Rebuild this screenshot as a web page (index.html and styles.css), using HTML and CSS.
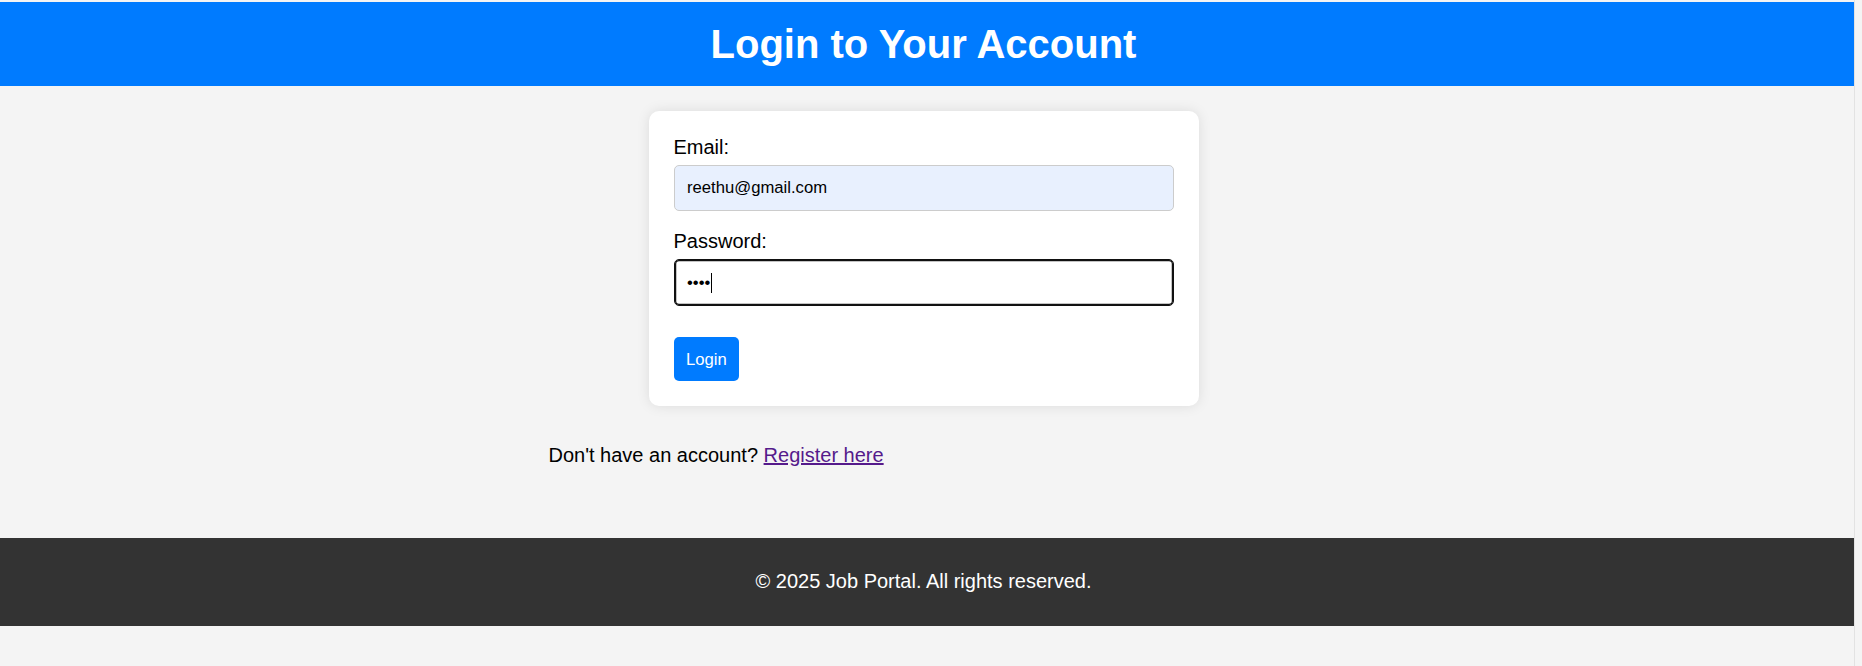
FILE: index.html
```html
<!DOCTYPE html>
<html lang="en">
<head>
<meta charset="utf-8">
<title>Login - Job Portal</title>
<link rel="stylesheet" href="styles.css">
</head>
<body>
  <header class="site-header">
    <h1 class="site-title">Login to Your Account</h1>
  </header>
  <main class="container">
    <form class="login-card" action="#" onsubmit="return false;">
      <label class="field-label" for="email">Email:</label>
      <input class="field-input field-autofill" type="email" id="email" name="email" value="reethu@gmail.com">
      <label class="field-label" for="password">Password:</label>
      <div class="field-input field-focused">
        <input class="pw-inner" type="password" id="password" name="password" value="abcd"><span class="caret"></span>
      </div>
      <button class="login-btn" type="submit">Login</button>
    </form>
    <p class="register-note">Don't have an account? <a class="register-link" href="#">Register here</a></p>
  </main>
  <footer class="site-footer">
    <p class="footer-text">&copy; 2025 Job Portal. All rights reserved.</p>
  </footer>
</body>
</html>
```

FILE: styles.css
```css
html {
  background: #f4f4f4;
}

body {
  margin: 0 7px 0 0;
  padding-top: 2px;
  border-right: 1px solid #e2e2e2;
  min-height: 664px;
  font-family: "Liberation Sans", Arial, sans-serif;
  font-size: 20px;
  color: #000;
}

.site-header {
  background: #007bff;
  color: #fff;
  padding: 18.75px 7px 18.75px 0;
  text-align: center;
}

.site-title {
  margin: 0;
  font-size: 40px;
  line-height: 46px;
  font-weight: bold;
}

.container {
  width: 750px;
  margin: 0 0 0 calc(50% - 378.5px);
  display: flex;
  flex-direction: column;
}

.login-card {
  box-sizing: border-box;
  width: 550px;
  margin: 25px auto 0;
  padding: 25px;
  background: #fff;
  border-radius: 10px;
  box-shadow: 0 0 12.5px rgba(0, 0, 0, 0.1);
  display: flex;
  flex-direction: column;
  align-items: flex-start;
}

.field-label {
  display: block;
  font-size: 20px;
  line-height: 23px;
  margin-bottom: 6.25px;
}

.field-input {
  box-sizing: border-box;
  width: 100%;
  height: 46.67px;
  padding: 12.5px;
  margin: 0 0 18.75px;
  border: 1.25px solid #cccccc;
  border-radius: 5px;
  font-family: "Liberation Sans", Arial, sans-serif;
  font-size: 16.67px;
  color: #000;
  background: #fff;
  outline: none;
}

.field-autofill {
  background: #e8f0fe;
}

.field-focused {
  display: flex;
  align-items: center;
  border-color: #111;
  box-shadow: inset 0 0 0 1.25px #111;
  padding: 0 12.5px;
}

.pw-inner {
  border: none;
  outline: none;
  padding: 0;
  margin: 0;
  background: transparent;
  font-family: "Liberation Sans", Arial, sans-serif;
  font-size: 16.67px;
  color: #000;
  width: 23.5px;
}

.caret {
  display: block;
  width: 1.25px;
  height: 20px;
  background: #000;
}

.login-btn {
  display: block;
  margin-top: 12.5px;
  padding: 12.5px;
  border: none;
  border-radius: 5px;
  background: #007bff;
  color: #fff;
  font-family: "Liberation Sans", Arial, sans-serif;
  font-size: 16.67px;
  line-height: 19.17px;
  cursor: pointer;
}

.register-note {
  margin: 37.5px 0 0;
  font-size: 20px;
  line-height: 23px;
}

.register-link {
  color: #551a8b;
}

.site-footer {
  margin-top: 71px;
  background: #333;
  color: #fff;
  text-align: center;
  padding: 12.5px 7px 12.5px 0;
}

.footer-text {
  margin: 20px 0;
  font-size: 20px;
  line-height: 23px;
}
```
